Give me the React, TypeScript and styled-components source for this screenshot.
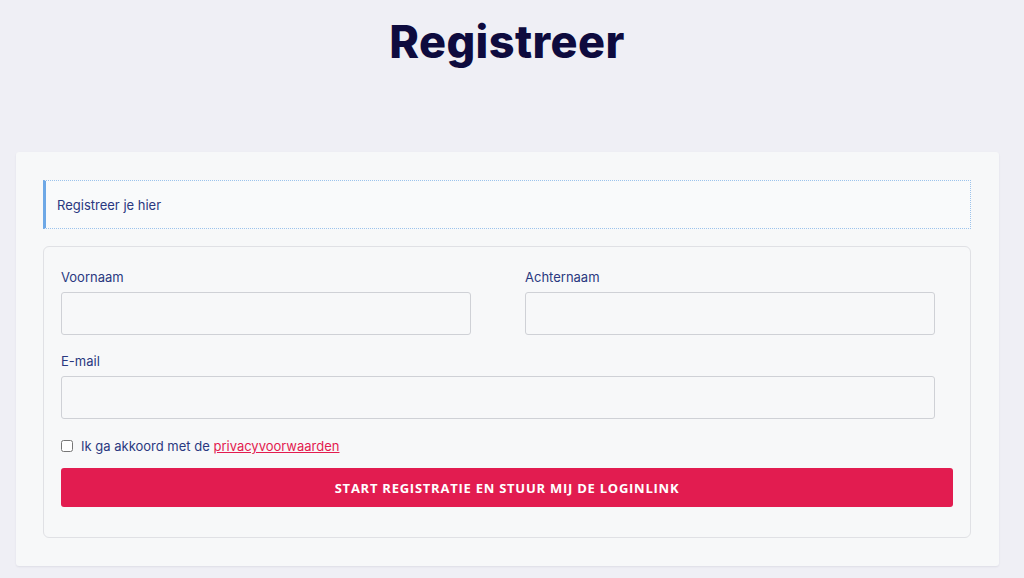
import React from "react";
import styled, { createGlobalStyle } from "styled-components";

const Global = createGlobalStyle`
  html, body { margin: 0; padding: 0; background: #efeff5; }
  body { font-family: "Inter", "Noto Sans", sans-serif; }
  * { box-sizing: border-box; }
`;

const Page = styled.div`
  width: 1024px;
  min-height: 578px;
  padding-top: 14px;
`;

const Title = styled.h1`
  margin: 0;
  text-align: center;
  font-family: "Inter", sans-serif;
  font-weight: 800;
  font-size: 45px;
  line-height: 56px;
  color: #0e0b3e;
  letter-spacing: 0.4px;
  padding-right: 10px;
`;

const Card = styled.div`
  margin: 82px 25px 0 16px;
  background: #f7f8f9;
  border-radius: 3px;
  box-shadow: 0 1px 2px rgba(20, 20, 60, 0.08);
  padding: 28px 28px 28px 27px;
  display: flex;
  flex-direction: column;
  gap: 17px;
`;

const Notice = styled.div`
  height: 49px;
  border: 1px dotted #9cc3ec;
  border-left: 3px solid #6ea8e6;
  background: #f9fafb;
  display: flex;
  align-items: center;
  padding-left: 11px;
  font-size: 13px;
  color: #2a3880;
`;

const FormBox = styled.div`
  border: 1px solid #e0e1e5;
  border-radius: 6px;
  padding: 23px 17px 30px 17px;
  display: flex;
  flex-direction: column;
`;

const FieldGrid = styled.div`
  display: grid;
  grid-template-columns: 1fr 1fr;
  column-gap: 54px;
  row-gap: 19px;
  padding-right: 18px;
`;

const Field = styled.div<{ $wide?: boolean }>`
  display: flex;
  flex-direction: column;
  gap: 7px;
  grid-column: ${(p) => (p.$wide ? "1 / -1" : "auto")};
`;

const Label = styled.label`
  font-size: 13px;
  line-height: 15px;
  color: #2a3880;
`;

const Input = styled.input`
  height: 43px;
  width: 100%;
  border: 1px solid #cfd1d6;
  border-radius: 3px;
  background: #f7f8f9;
  outline: none;
`;

const CheckRow = styled.div`
  display: flex;
  align-items: center;
  gap: 8px;
  margin-top: 19px;
  font-size: 13px;
  color: #2a3880;
`;

const Check = styled.input`
  width: 12px;
  height: 12px;
  margin: 0;
  accent-color: #555;
`;

const Link = styled.a`
  color: #e31b4f;
  text-decoration: underline;
`;

const Button = styled.button`
  margin-top: 14px;
  height: 39px;
  border: none;
  border-radius: 3px;
  background: #e21c50;
  color: #fff;
  font-family: "Open Sans", sans-serif;
  font-weight: 700;
  font-size: 13px;
  letter-spacing: 0.75px;
  text-transform: uppercase;
`;

export default function App() {
  return (
    <Page>
      <Global />
      <Title>Registreer</Title>
      <Card>
        <Notice>Registreer je hier</Notice>
        <FormBox>
          <FieldGrid>
            <Field>
              <Label>Voornaam</Label>
              <Input type="text" />
            </Field>
            <Field>
              <Label>Achternaam</Label>
              <Input type="text" />
            </Field>
            <Field $wide>
              <Label>E-mail</Label>
              <Input type="email" />
            </Field>
          </FieldGrid>
          <CheckRow>
            <Check type="checkbox" />
            <span>
              Ik ga akkoord met de <Link href="#">privacyvoorwaarden</Link>
            </span>
          </CheckRow>
          <Button>Start registratie en stuur mij de loginlink</Button>
        </FormBox>
      </Card>
    </Page>
  );
}
